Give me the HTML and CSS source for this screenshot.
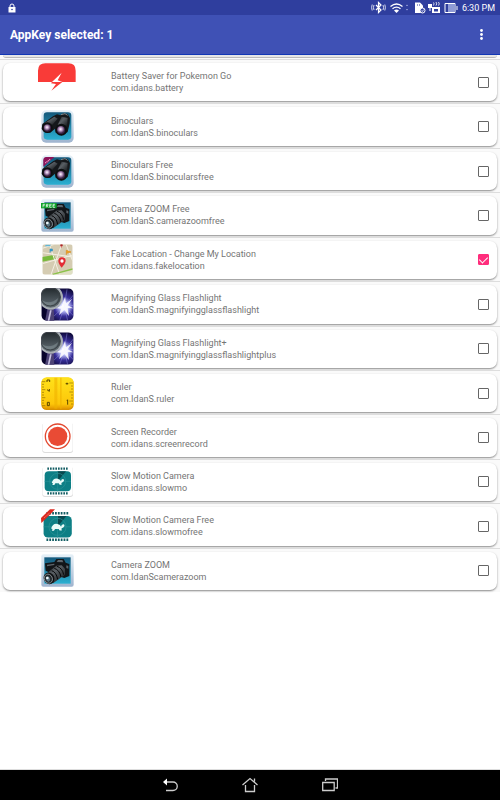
FILE: index.html
```html
<!DOCTYPE html>
<html lang="en">

<head>
    <meta charset="UTF-8">
    <meta name="viewport" content="width=device-width, initial-scale=1.0">
    <title>AppKey</title>
    <link rel="stylesheet" href="styles.css">
</head>

<body>
    <!-- icon shapes shared by the rows -->
    <svg class="sprite" aria-hidden="true">
        <defs>
            <linearGradient id="frame" x1="0" y1="0" x2="0" y2="1">
                <stop offset="0" stop-color="#e6f1f8" />
                <stop offset="1" stop-color="#9fb4cf" />
            </linearGradient>
            <linearGradient id="blue" x1="0" y1="0" x2="0" y2="1">
                <stop offset="0" stop-color="#14597c" />
                <stop offset="1" stop-color="#2bb0d2" />
            </linearGradient>
            <radialGradient id="lens" cx=".45" cy=".4">
                <stop offset="0" stop-color="#fff" />
                <stop offset=".4" stop-color="#c3a3cc" />
                <stop offset="1" stop-color="#3a2145" />
            </radialGradient>
            <linearGradient id="barrel" x1="0" y1="0" x2="1" y2="1">
                <stop offset="0" stop-color="#15181b" />
                <stop offset=".4" stop-color="#5a6065" />
                <stop offset="1" stop-color="#0d0f11" />
            </linearGradient>
            <radialGradient id="flash" cx=".7" cy=".56" r=".6">
                <stop offset="0" stop-color="#fff" />
                <stop offset=".22" stop-color="#c3c8ff" />
                <stop offset=".5" stop-color="#382f98" />
                <stop offset="1" stop-color="#07032a" />
            </radialGradient>
            <linearGradient id="glass" x1="0" y1="0" x2="0" y2="1">
                <stop offset="0" stop-color="#1c2226" />
                <stop offset="1" stop-color="#67737a" />
            </linearGradient>
            <linearGradient id="gold" x1="0" y1="0" x2="0" y2="1">
                <stop offset="0" stop-color="#ffe21a" />
                <stop offset=".85" stop-color="#fdc60a" />
                <stop offset="1" stop-color="#e59a00" />
            </linearGradient>
            <clipPath id="round">
                <rect x="1" y="1" width="97" height="97" rx="16" />
            </clipPath>
            <clipPath id="mapclip">
                <rect x="4" y="4" width="91" height="91" rx="8" />
            </clipPath>
        </defs>

        <symbol id="battery" viewBox="0 0 99 99" overflow="visible">
            <path d="M-9 48V14Q-9-8 13-8H82Q104-8 104 14V48Z" fill="#f93b38" />
            <path d="M62 20 29 52 46 55 55 48H64L50 43Z" fill="#fff" />
            <path d="M33 48H64L31 74 45 54 30 52Z" fill="#f93b38" />
        </symbol>

        <symbol id="binoculars" viewBox="0 0 99 99">
            <rect x="1" y="1" width="97" height="97" rx="14" fill="url(#frame)" />
            <rect x="8" y="7" width="83" height="82" rx="10" fill="url(#blue)" />
            <path d="M4 42 36 19 48 13 58 16 68 10 80 12 87 24 86 40 80 66 62 76 44 68 42 56 28 68 10 66 2 56Z" fill="#15181b" />
            <path d="M10 40 40 20 50 26 34 44Z" fill="url(#barrel)" />
            <path d="M50 44 62 20 80 24 78 52Z" fill="url(#barrel)" />
            <path d="M60 14 72 11 80 16" stroke="#7d8488" stroke-width="3" fill="none" />
            <circle cx="19" cy="53" r="16" fill="#0d0f11" />
            <circle cx="19" cy="54" r="11" fill="url(#lens)" />
            <circle cx="61" cy="59" r="18" fill="#0d0f11" />
            <circle cx="60" cy="60" r="12" fill="url(#lens)" />
        </symbol>

        <symbol id="binoculars-free" viewBox="0 0 99 99">
            <use href="#binoculars" width="99" height="99" />
            <path d="M7 16Q7 6 17 6H40L7 35Z" fill="#8d1359" />
            <path d="M13 24 29 12" stroke="#e7a9cb" stroke-width="4" stroke-dasharray="3 2" />
        </symbol>

        <symbol id="camera" viewBox="0 0 99 99">
            <rect x="1" y="1" width="97" height="97" rx="6" fill="url(#frame)" />
            <rect x="10" y="10" width="79" height="79" fill="url(#blue)" />
            <path d="M12 28 40 24 46 15H68L74 26 85 30V66L70 72 40 62 14 50Z" fill="#121518" />
            <path d="M47 24 51 18H64L67 25ZM18 32 40 29V33L18 37ZM76 34 82 36V44L76 42Z" fill="#5d656b" />
            <path d="M12 62 46 35 62 34 72 44 72 62 36 88Z" fill="url(#barrel)" />
            <path d="M32 50Q46 54 50 76M40 43Q56 48 60 69M48 37Q64 42 68 62" stroke="#050607" stroke-width="3" fill="none" />
            <ellipse cx="24" cy="73" rx="16" ry="18" transform="rotate(-25 24 73)" fill="#0c0e10" />
            <ellipse cx="22" cy="74" rx="12" ry="14" transform="rotate(-25 22 74)" fill="#23292d" stroke="#a7b0b5" stroke-width="2" />
            <ellipse cx="21" cy="75" rx="6" ry="8" transform="rotate(-25 21 75)" fill="#5c7785" />
            <circle cx="19" cy="72" r="4" fill="#eef6fa" />
        </symbol>

        <symbol id="camera-free" viewBox="0 0 99 99">
            <use href="#camera" width="99" height="99" />
            <rect x="0" y="12" width="47" height="16" fill="#10a32c" />
            <path d="M6 25V16H12M6 20H11M16 25V16H21V20H16L22 25M32 16H26V25H32M26 20H31M42 16H36V25H42M36 20H41" fill="none" stroke="#fff" stroke-width="2" />
        </symbol>

        <symbol id="map" viewBox="0 0 99 99">
            <g clip-path="url(#mapclip)">
                <rect x="4" y="4" width="91" height="91" fill="#d5ccb2" />
                <path d="M4 42 38 36 44 48 4 56Z" fill="#79ba3c" />
                <path d="M40 95 95 76V95Z" fill="#dfe0c4" />
                <path d="M4 29 95 42M4 62 95 36M25 4 56 95M62 4 30 95M4 16 40 4M75 4 95 54" stroke="#f3efe2" stroke-width="3" fill="none" />
                <path d="M35 94 95 78" stroke="#8bc34a" stroke-width="4" />
                <path d="M14 5H30L27 10H12Z" fill="#63b6d6" />
            </g>
            <path d="M62 74Q52 62 52 54A11 11 0 0 1 74 54Q73 63 62 74Z" fill="#e32c35" />
            <circle cx="63" cy="54" r="5" fill="#fff" />
            <path d="M61 14V6M59 5H64V9H59Z" stroke="#d73b3b" stroke-width="2" />
            <path d="M76 36V22L90 27 77 31" fill="#f3a51e" stroke="#d88d20" stroke-width="2" />
            <path d="M27 29V18H34V24H28" fill="#38a5d5" stroke="#2788b9" stroke-width="2" />
        </symbol>

        <symbol id="magnifier" viewBox="0 0 99 99">
            <g clip-path="url(#round)">
                <rect x="1" y="1" width="97" height="97" fill="url(#flash)" />
                <path d="M70 55 55 8M70 55 78 4M70 55 98 20M70 55 98 52M70 55 98 84M70 55 80 98M70 55 56 98M70 55 35 88" stroke="#a3a1f5" stroke-width="2" opacity=".6" />
                <path d="M72 27 75 46 94 32 80 52 97 61 80 60 84 84 70 66 54 82 60 62 44 61 62 53Z" fill="#fff" opacity=".85" />
                <path d="M20 60H38L40 99H12Z" fill="#4d4375" />
                <path d="M27 67 20 99H25L32 67Z" fill="#c9c3e2" />
                <circle cx="29" cy="28" r="34" fill="url(#glass)" stroke="#a9afb4" stroke-width="6" />
                <circle cx="28" cy="26" r="28" fill="none" stroke="#3b4246" stroke-width="3" />
                <path d="M2 36Q26 52 52 30Q46 50 28 52 10 52 2 36Z" fill="#8c999d" opacity=".5" />
            </g>
        </symbol>

        <symbol id="ruler" viewBox="0 0 99 99">
            <rect x="1" y="2" width="97" height="97" rx="16" fill="#d99100" />
            <rect x="1" y="1" width="97" height="94" rx="16" fill="url(#gold)" />
            <path d="M40 2H49V95H40ZM57 2H62V95H57Z" fill="#f0b300" opacity=".6" />
            <path d="M3 14H13M3 22H9M3 30H9M3 38H13M3 46H9M3 54H9M3 62H13M3 70H9M3 78H9M3 86H13M96 18H85M96 27H90M96 36H90M96 45H85M96 54H90M96 63H90M96 72H85M96 81H90" stroke="#936c00" stroke-width="2" />
            <path d="M18 9H26V15M18 9V15M18 38 25 43V36M25 76H19V86H25ZM74 20H82M78 17V23M80 68V83M77 70H80" stroke="#5b4600" stroke-width="3" fill="none" />
        </symbol>

        <symbol id="recorder" viewBox="0 0 99 99">
            <rect x="4" y="6" width="92" height="90" rx="8" fill="#ddd" />
            <rect x="5" y="4" width="90" height="89" rx="8" fill="#fff" />
            <circle cx="50" cy="46" r="37" fill="#fff" stroke="#e2482f" stroke-width="4" />
            <circle cx="50" cy="46" r="29" fill="#e94b35" />
        </symbol>

        <symbol id="slowmo" viewBox="0 0 99 99">
            <path d="M19 11H81M19 85H81" stroke="#145e64" stroke-width="7" stroke-dasharray="5 3" />
            <rect x="11" y="19" width="79" height="60" rx="12" fill="#0d7f85" />
            <path d="M50 49V19H75Z" fill="#07484e" />
            <circle cx="50" cy="49" r="24" fill="none" stroke="#2a9297" stroke-width="2" />
            <path d="M11 49H90M50 19V79" stroke="#2a9297" stroke-width="2" />
            <path d="M32 54Q37 38 50 41 58 43 60 49 61 41 67 42 72 45 67 50L61 54 62 59H56L53 55H43L40 60H34L36 55Z" fill="#e9fbf8" />
        </symbol>

        <symbol id="slowmo-card" viewBox="0 0 99 99">
            <rect x="4" y="6" width="92" height="90" rx="8" fill="#ddd" />
            <rect x="5" y="4" width="90" height="89" rx="8" fill="#fff" />
            <use href="#slowmo" width="99" height="99" />
        </symbol>

        <symbol id="slowmo-free" viewBox="0 0 99 99" overflow="visible">
            <use href="#slowmo" x="-4" y="-2" width="106" height="106" />
            <path d="M0 24 27-2H42L28 13 1 39Z" fill="#dc2a20" />
            <path d="M10 23 26 9" stroke="#f08a80" stroke-width="3" stroke-dasharray="3 2" />
        </symbol>
    </svg>

    <div class="status">
        <svg class="lock" viewBox="0 0 8 10"><path d="M2 4V3a2 2 0 0 1 4 0v1" fill="none" stroke="#fff" stroke-width="1" /><path d="M.5 4h7v5.500h-7z" fill="#fff" /><circle cx="4" cy="6.500" r=".8" fill="#303f9f" /></svg>
        <div class="tray">
            <svg width="88" height="13" viewBox="0 0 88 13" fill="none" stroke="#fff">
                <path d="M5 4l5 5-2.500 2.500v-10L10 4 5 9" stroke-width="1.200" />
                <path d="M3 4Q1.800 6.500 3 9M12 4Q13.200 6.500 12 9M1.200 3.500Q0 6.500 1.200 9.500M13.800 3.500Q15 6.500 13.800 9.500" stroke-width=".8" />
                <path d="M19.500 5.500Q25.500.5 31.500 5.500M21.500 7.700Q25.500 4.500 29.500 7.700" stroke-width="1.300" />
                <path d="M23 9.500q2.500-2 5 0L25.500 12z" fill="#fff" stroke="none" />
                <path d="M35 5l1-1.500L37 5zM35 8l1 1.500L37 8z" fill="#a9b2e2" stroke="none" />
                <path d="M44 1.500h5L52 4.500V12h-8z" fill="#fff" stroke="none" />
                <path d="M46 4h1M48 4h1" stroke="#303f9f" />
                <circle cx="51.500" cy="9.500" r="2.500" fill="#303f9f" stroke="#fff" />
                <path d="M50.300 9.500l1 1 1.500-2" stroke="#fff" stroke-width=".8" />
                <path d="M57 3h4v4h-1.500v3h-1V7H57zM61 6h8v6h-8z" fill="#fff" stroke="none" />
                <path d="M62.500 1.500q1 1 0 3M65 1q1.500 2 0 3.500M67.500 1q1.500 2 0 3.500" stroke-width=".8" />
                <path d="M63 8h4v2.500h-4z" fill="#303f9f" stroke="none" />
                <path d="M74 2.500h10v9H74zM86 5v4" />
                <path d="M77 3h6.500v8H77z" fill="#8f9bd6" stroke="none" />
            </svg>
            <span class="time">6:30 PM</span>
        </div>
    </div>

    <header class="toolbar">
        <h1>AppKey selected: 1</h1>
        <button class="more" type="button" aria-label="More options">
            <svg width="3" height="11" viewBox="0 0 3 11" fill="#fff"><circle cx="1.500" cy="1.500" r="1.400" /><circle cx="1.500" cy="5.500" r="1.400" /><circle cx="1.500" cy="9.500" r="1.400" /></svg>
        </button>
    </header>

    <main>
        <div class="previous"></div>
        <ul class="apps">
            <li><label class="card"><svg class="icon"><use href="#battery" /></svg><span class="text">Battery Saver for Pokemon Go<br>com.idans.battery</span><input type="checkbox"></label></li>
            <li><label class="card"><svg class="icon"><use href="#binoculars" /></svg><span class="text">Binoculars<br>com.IdanS.binoculars</span><input type="checkbox"></label></li>
            <li><label class="card"><svg class="icon"><use href="#binoculars-free" /></svg><span class="text">Binoculars Free<br>com.IdanS.binocularsfree</span><input type="checkbox"></label></li>
            <li><label class="card"><svg class="icon"><use href="#camera-free" /></svg><span class="text">Camera ZOOM Free<br>com.IdanS.camerazoomfree</span><input type="checkbox"></label></li>
            <li><label class="card"><svg class="icon"><use href="#map" /></svg><span class="text">Fake Location - Change My Location<br>com.idans.fakelocation</span><input type="checkbox" checked></label></li>
            <li><label class="card"><svg class="icon"><use href="#magnifier" /></svg><span class="text">Magnifying Glass Flashlight<br>com.IdanS.magnifyingglassflashlight</span><input type="checkbox"></label></li>
            <li><label class="card"><svg class="icon"><use href="#magnifier" /></svg><span class="text">Magnifying Glass Flashlight+<br>com.IdanS.magnifyingglassflashlightplus</span><input type="checkbox"></label></li>
            <li><label class="card"><svg class="icon"><use href="#ruler" /></svg><span class="text">Ruler<br>com.IdanS.ruler</span><input type="checkbox"></label></li>
            <li><label class="card"><svg class="icon"><use href="#recorder" /></svg><span class="text">Screen Recorder<br>com.idans.screenrecord</span><input type="checkbox"></label></li>
            <li><label class="card"><svg class="icon"><use href="#slowmo-card" /></svg><span class="text">Slow Motion Camera<br>com.idans.slowmo</span><input type="checkbox"></label></li>
            <li><label class="card"><svg class="icon"><use href="#slowmo-free" /></svg><span class="text">Slow Motion Camera Free<br>com.idans.slowmofree</span><input type="checkbox"></label></li>
            <li><label class="card"><svg class="icon"><use href="#camera" /></svg><span class="text">Camera ZOOM<br>com.IdanScamerazoom</span><input type="checkbox"></label></li>
        </ul>
    </main>

    <nav class="navbar">
        <button type="button" aria-label="Back">
            <svg width="16" height="16" viewBox="0 0 16 16" fill="none" stroke="#ccc"><path d="M3 5h8a4 4 0 0 1 0 8.500H4" stroke-width="1.300" /><path d="M1 5l4-3.500v7z" fill="#fff" stroke="none" /></svg>
        </button>
        <button type="button" aria-label="Home">
            <svg width="16" height="16" viewBox="0 0 16 16" fill="none" stroke="#ccc" stroke-width="1.300"><path d="M.5 8L8 1.500 15.500 8M3.500 8v6.500h9V8M12.500 4.500V1.500" /></svg>
        </button>
        <button type="button" aria-label="Recent apps">
            <svg width="16" height="16" viewBox="0 0 16 16" fill="none" stroke="#ccc" stroke-width="1.300"><path d="M.7 5.500h11.500v8H.7zM3.500 4V2h12v9h-2" /></svg>
        </button>
    </nav>
</body>

</html>
```
FILE: styles.css
```css
* {
    margin: 0;
    padding: 0;
    box-sizing: border-box;
}

body {
    display: flex;
    flex-direction: column;
    min-height: 100vh;
    background-color: #fff;
    font-family: Roboto, "Liberation Sans", sans-serif;
}

button {
    display: flex;
    justify-content: center;
    align-items: center;
    border: none;
    background: none;
    cursor: pointer;
}

.sprite {
    position: absolute;
    width: 0;
    height: 0;
}

/* status bar */
.status {
    display: flex;
    justify-content: space-between;
    align-items: center;
    height: 15px;
    padding: 0 5px 0 8px;
    background-color: #2f3e9e;
    color: #fff;
}

.status .lock {
    width: 8px;
    height: 10px;
}

.tray {
    display: flex;
    align-items: center;
    gap: 3px;
}

.time {
    font-size: 9px;
    line-height: 12px;
}

/* toolbar */
.toolbar {
    display: flex;
    justify-content: space-between;
    align-items: center;
    height: 40px;
    padding: 0 10px;
    border-bottom: 1px solid #1237b5;
    background-color: #3f51b5;
    color: #fff;
}

.toolbar h1 {
    font-size: 12px;
    line-height: 16px;
    font-weight: 700;
}

.more {
    width: 18px;
    height: 24px;
}

/* list */
main {
    flex: 1;
    border-bottom: 1px solid #ddd;
}

/* bottom edge of the row scrolled under the toolbar */
.previous {
    height: 4px;
    padding: 0 3px;
    background-color: #fafafa;
}

.previous::before {
    content: "";
    display: block;
    height: 2px;
    border-bottom: 1px solid #bbb;
    border-radius: 0 0 7px 7px;
    background-color: #e6e6e6;
}

.apps {
    display: grid;
    grid-auto-rows: 1fr;
    min-height: 533px;
    list-style: none;
    background-color: #fafafa;
}

.apps li {
    display: flex;
    padding: 3px 3px 2px;
    border-top: 1px solid #ddd;
}

.card {
    flex: 1;
    display: grid;
    grid-template-columns: 33px 1fr 11px;
    column-gap: 37px;
    align-items: center;
    padding: 0 8px 0 38px;
    border-radius: 7px;
    background-color: #fff;
    box-shadow: 0 1px 2px rgba(0, 0, 0, .45);
}

.icon {
    width: 33px;
    height: 33px;
    overflow: visible;
}

.text {
    color: #757575;
    font-size: 9px;
    line-height: 12px;
}

.card input {
    appearance: none;
    display: flex;
    justify-content: center;
    width: 11px;
    height: 11px;
    border: 1px solid #666;
    border-radius: 1px;
}

.card input:checked {
    border-color: #ff2d7c;
    background-color: #ff2d7c;
}

.card input:checked::before {
    content: "";
    width: 4px;
    height: 7px;
    border: solid #fff;
    border-width: 0 1px 1px 0;
    transform: rotate(45deg);
}

/* navigation bar */
.navbar {
    display: flex;
    justify-content: center;
    height: 30px;
    background-color: #000;
}

.navbar button {
    width: 80px;
}
```
